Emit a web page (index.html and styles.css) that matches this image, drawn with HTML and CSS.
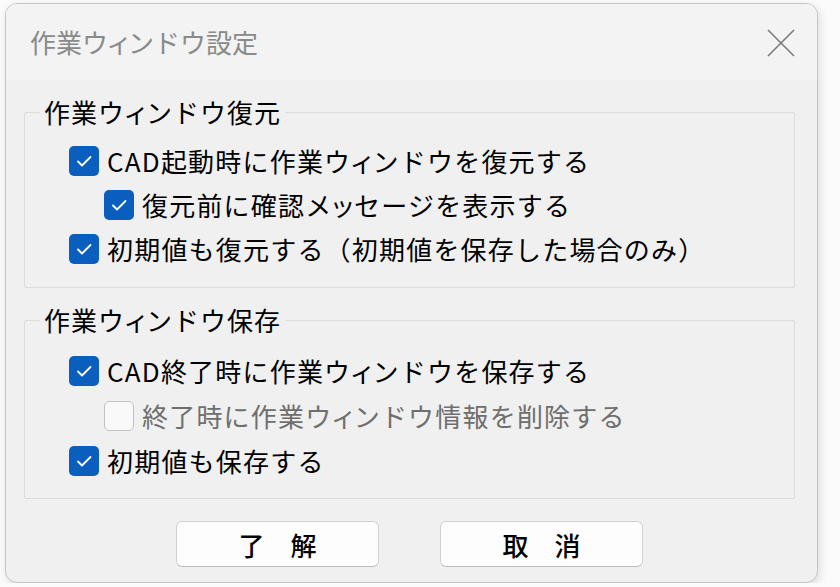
FILE: index.html
```html
<!DOCTYPE html>
<html lang="ja">
<head>
    <meta charset="UTF-8">
    <meta name="viewport" content="width=device-width, initial-scale=1.0">
    <title>作業ウィンドウ設定</title>
    <link rel="stylesheet" href="styles.css">
</head>
<body>

    <div class="window">
        <div class="titlebar">
            <span class="title">作業ウ<span class="sm">ィ</span>ンドウ設定</span>
            <svg class="close" width="28" height="28" viewBox="0 0 28 28">
                <path d="M1 1 L27 27 M27 1 L1 27" stroke="#7b7b7b" stroke-width="1.6" fill="none"/>
            </svg>
        </div>

        <div class="content">
            <!-- 復元 -->
            <fieldset class="group">
                <legend>作業ウ<span class="sm">ィ</span>ンドウ復元</legend>
                <div class="rows">
                    <label class="row">
                        <span class="box checked"><svg width="30" height="30" viewBox="0 0 30 30"><path d="M9 15.5 L13 19.5 L21.5 11" stroke="#fff" stroke-width="1.8" fill="none" stroke-linecap="round" stroke-linejoin="round"/></svg></span>
                        <span>CAD起動時に作業ウ<span class="sm">ィ</span>ンドウを復元する</span>
                    </label>
                    <label class="row sub">
                        <span class="box checked"><svg width="30" height="30" viewBox="0 0 30 30"><path d="M9 15.5 L13 19.5 L21.5 11" stroke="#fff" stroke-width="1.8" fill="none" stroke-linecap="round" stroke-linejoin="round"/></svg></span>
                        <span>復元前に確認メ<span class="sm">ッ</span>セージを表示する</span>
                    </label>
                    <label class="row">
                        <span class="box checked"><svg width="30" height="30" viewBox="0 0 30 30"><path d="M9 15.5 L13 19.5 L21.5 11" stroke="#fff" stroke-width="1.8" fill="none" stroke-linecap="round" stroke-linejoin="round"/></svg></span>
                        <span>初期値も復元する（初期値を保存した場合のみ）</span>
                    </label>
                </div>
            </fieldset>

            <!-- 保存 -->
            <fieldset class="group second">
                <legend>作業ウ<span class="sm">ィ</span>ンドウ保存</legend>
                <div class="rows">
                    <label class="row">
                        <span class="box checked"><svg width="30" height="30" viewBox="0 0 30 30"><path d="M9 15.5 L13 19.5 L21.5 11" stroke="#fff" stroke-width="1.8" fill="none" stroke-linecap="round" stroke-linejoin="round"/></svg></span>
                        <span>CAD終了時に作業ウ<span class="sm">ィ</span>ンドウを保存する</span>
                    </label>
                    <label class="row sub disabled">
                        <span class="box"></span>
                        <span>終了時に作業ウ<span class="sm">ィ</span>ンドウ情報を削除する</span>
                    </label>
                    <label class="row">
                        <span class="box checked"><svg width="30" height="30" viewBox="0 0 30 30"><path d="M9 15.5 L13 19.5 L21.5 11" stroke="#fff" stroke-width="1.8" fill="none" stroke-linecap="round" stroke-linejoin="round"/></svg></span>
                        <span>初期値も保存する</span>
                    </label>
                </div>
            </fieldset>

            <div class="buttons">
                <button class="btn">了　解</button>
                <button class="btn">取　消</button>
            </div>
        </div>
    </div>

</body>
</html>
```

FILE: styles.css
```css
body {
    font-family: "Noto Sans CJK JP", "Noto Sans", sans-serif;
    background-color: #fbfbfb;
    color: #000;
    margin: 0;
    padding: 3px 0 0 5px;
}

.window {
    width: 813px;
    height: 580px;
    box-sizing: border-box;
    background-color: #f0f0f0;
    border: 1px solid #c4c4c4;
    border-radius: 12px;
    overflow: hidden;
    box-shadow: 2px 3px 10px rgba(0, 0, 0, 0.12);
}

.titlebar {
    height: 76px;
    background-color: #f3f3f3;
    display: flex;
    align-items: center;
    justify-content: space-between;
    padding: 0 22px 0 24px;
}

.title {
    font-size: 26px;
    color: #8a8a8a;
    line-height: 30px;
}

/* 小さい「ィ」「ッ」はプロポーショナル幅 */
.sm {
    font-feature-settings: "palt";
}

.close {
    display: block;
    margin-top: 2px;
}

.content {
    padding: 17px 22px 0 18px;
}

.group {
    margin: 0;
    padding: 0;
    border: 1px solid #dcdcdc;
    border-radius: 2px;
}

.group legend {
    margin-left: 15px;
    padding: 0 4px;
    font-size: 26px;
    line-height: 30px;
    letter-spacing: 1px;
}

.group .rows {
    padding: 12px 0 16px 44px;
}

.group.second {
    margin-top: 17px;
}

.group.second .rows {
    padding: 13px 0 15px 44px;
}

.row {
    display: flex;
    align-items: center;
    gap: 8px;
    height: 44px;
    font-size: 26px;
    line-height: 30px;
    letter-spacing: 1.2px;
    white-space: nowrap;
}

.group.second .row {
    height: 45px;
}

.row.sub {
    padding-left: 35px;
}

.row.disabled {
    color: #6e6e6e;
}

.box {
    width: 30px;
    height: 30px;
    flex: none;
    box-sizing: border-box;
    border-radius: 5px;
    border: 1px solid #c2c2c2;
    background-color: #f9f9f9;
}

.box.checked {
    border: none;
    background-color: #0a5fbe;
}

.box svg {
    display: block;
}

.buttons {
    display: flex;
    justify-content: center;
    gap: 61px;
    margin-top: 22px;
}

.btn {
    width: 203px;
    height: 46px;
    font-family: "Noto Sans CJK JP", sans-serif;
    font-size: 26px;
    font-weight: 500;
    color: #000;
    background-color: #fdfdfd;
    border: 1px solid #d0d0d0;
    border-bottom-color: #bdbdbd;
    border-radius: 6px;
    padding: 0;
}
```
